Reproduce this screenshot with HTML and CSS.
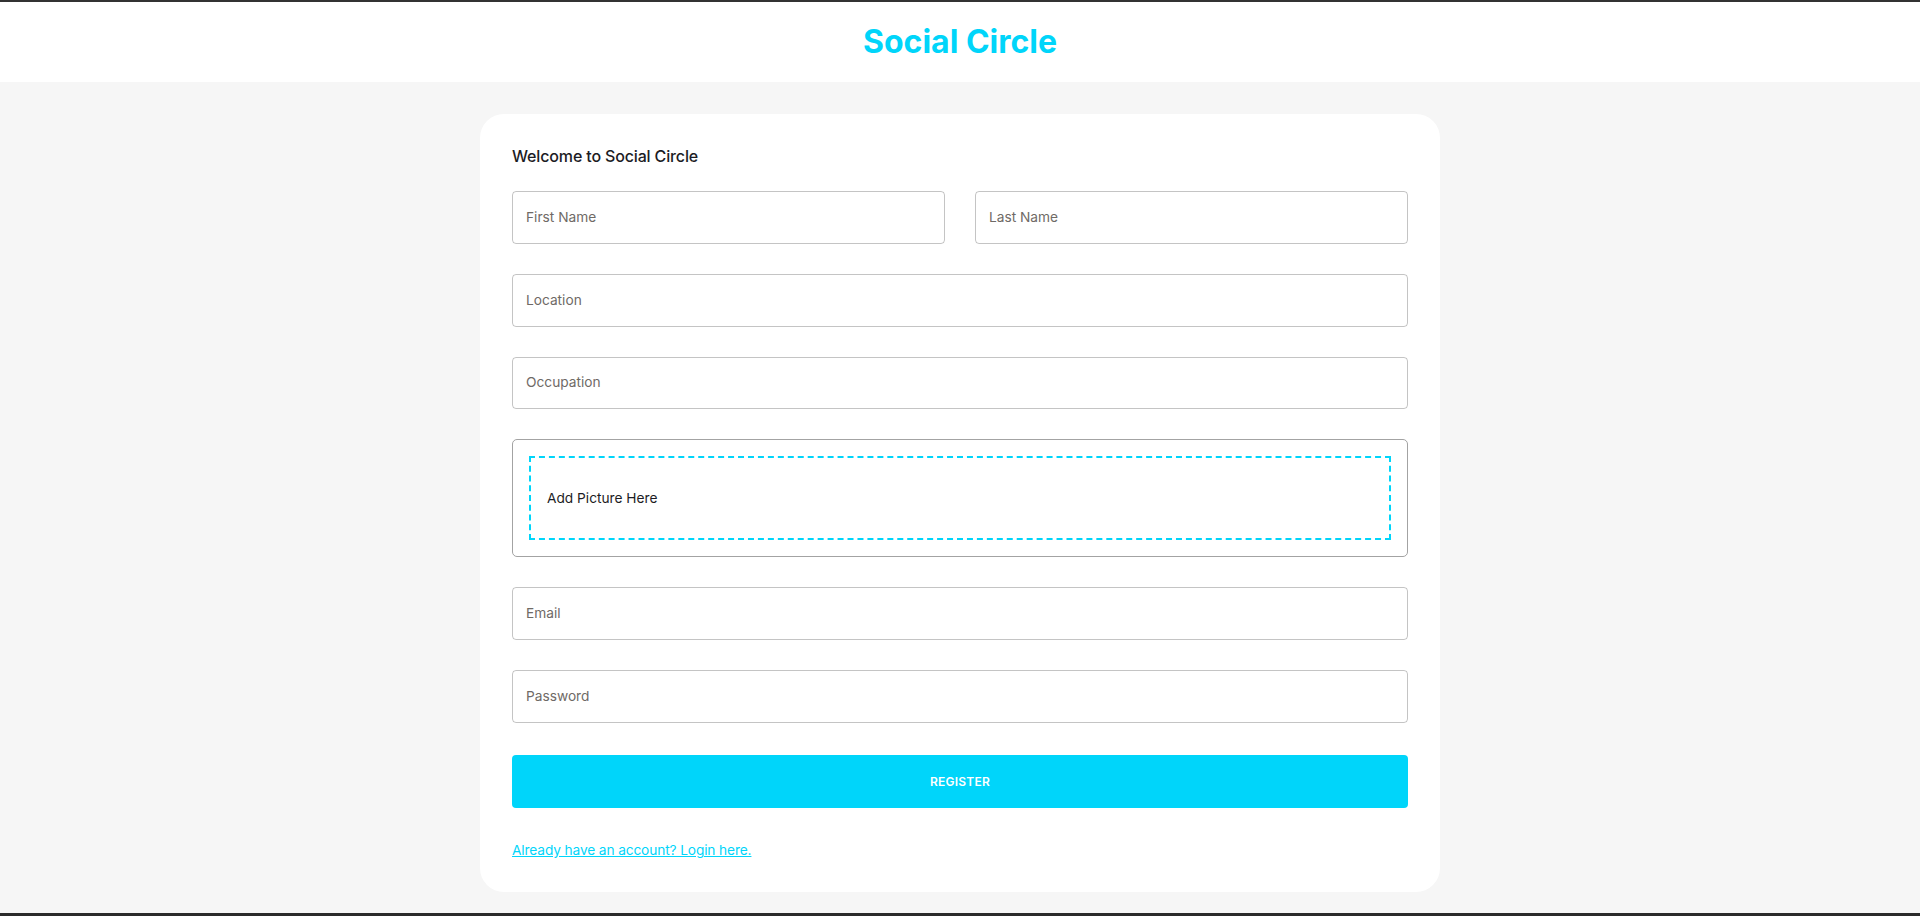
FILE: index.html
```html
<!DOCTYPE html>
<html lang="en">
<head>
<meta charset="utf-8">
<title>Social Circle</title>
<link rel="stylesheet" href="styles.css">
</head>
<body>
<header class="topbar">
  <h1 class="brand">Social Circle</h1>
</header>
<main class="card">
  <h2 class="welcome">Welcome to Social Circle</h2>
  <form class="form">
    <div class="field half"><span class="label">First Name</span></div>
    <div class="field half"><span class="label">Last Name</span></div>
    <div class="field full"><span class="label">Location</span></div>
    <div class="field full"><span class="label">Occupation</span></div>
    <div class="drop-wrap full">
      <div class="dropzone"><p class="drop-text">Add Picture Here</p></div>
    </div>
    <div class="field full"><span class="label">Email</span></div>
    <div class="field full"><span class="label">Password</span></div>
  </form>
  <div class="actions">
    <button class="register" type="button">Register</button>
  </div>
  <a class="login-link" href="#">Already have an account? Login here.</a>
</main>
<div class="frame-bottom"></div>
</body>
</html>
```
FILE: styles.css
```css
*, *::before, *::after {
  box-sizing: border-box;
}

html, body {
  margin: 0;
  padding: 0;
}

body {
  background: #f6f6f6;
  border-top: 2px solid #333333;
  font-family: Inter, "Noto Sans", sans-serif;
  font-size: 13.714px;
  line-height: 1.5;
  color: rgba(0, 0, 0, 0.87);
}

.topbar {
  background: #ffffff;
  padding: 16px 6%;
  text-align: center;
}

.brand {
  margin: 0;
  font-size: 32px;
  font-weight: 700;
  line-height: 1.5;
  color: #00d5fa;
}

.card {
  display: block;
  width: 50%;
  margin: 32px auto;
  padding: 32px;
  border-radius: 24px;
  background: #ffffff;
}

.welcome {
  margin: 0 0 24px;
  font-size: 16px;
  font-weight: 500;
  line-height: 1.334;
  letter-spacing: -0.15px;
  color: #1c1c24;
}

.form {
  display: grid;
  grid-template-columns: repeat(4, minmax(0, 1fr));
  gap: 30px;
}

.half {
  grid-column: span 2;
}

.full {
  grid-column: span 4;
}

.field {
  height: 52.71px;
  border: 1px solid rgba(0, 0, 0, 0.23);
  border-radius: 4px;
  padding: 15.5px 13px;
  display: flex;
  align-items: center;
}

.label {
  font-size: 13.714px;
  line-height: 1.4375;
  color: #6f6a66;
}

.drop-wrap {
  border: 1px solid #a3a3a3;
  border-radius: 5px;
  padding: 16px;
}

.dropzone {
  border: 2px dashed #00d5fa;
  padding: 16px;
}

.drop-text {
  margin: 13.714px 0;
  color: #1c1c24;
}

.actions {
  margin: 32px 0;
}

.register {
  display: block;
  width: 100%;
  border: 0;
  border-radius: 4px;
  padding: 16px;
  background: #00d5fa;
  color: #ffffff;
  font-family: inherit;
  font-size: 12px;
  font-weight: 600;
  line-height: 1.75;
  letter-spacing: 0.02em;
  text-transform: uppercase;
}

.login-link {
  display: block;
  color: #00d5fa;
  text-decoration: underline;
  font-size: 13.714px;
  line-height: 1.5;
  letter-spacing: -0.12px;
}

.frame-bottom {
  position: fixed;
  left: 0;
  right: 0;
  bottom: 0;
  height: 3px;
  background: #2b2b2b;
}
```
